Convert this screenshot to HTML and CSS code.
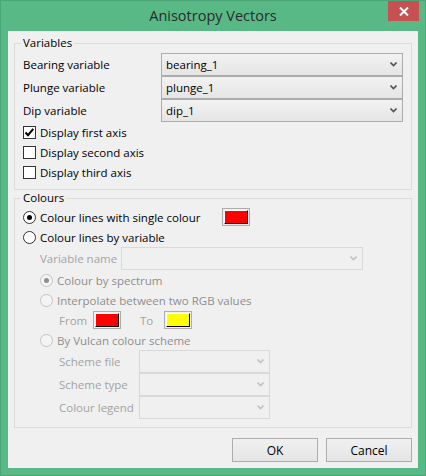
FILE: index.html
```html
<!DOCTYPE html>
<html lang="en">
<head>
  <meta charset="UTF-8">
  <meta name="viewport" content="width=device-width, initial-scale=1.0">
  <title>Anisotropy Vectors</title>
  <link rel="stylesheet" href="styles.css">
</head>
<body>

  <div class="window">
    <div class="titlebar">
      <span class="title">Anisotropy Vectors</span>
      <button class="close-button" aria-label="Close">
        <svg width="10" height="9" viewBox="0 0 10 9">
          <path d="M1 0.5 L9 8.5 M9 0.5 L1 8.5" stroke="#fff" stroke-width="2" fill="none"/>
        </svg>
      </button>
    </div>

    <div class="client">

      <div class="group group-variables">
        <div class="legend">Variables</div>

        <div class="field-row">
          <span class="field-label">Bearing variable</span>
          <div class="combo">
            <span>bearing_1</span>
            <svg class="arrow" width="7" height="5" viewBox="0 0 7 5"><path d="M0.5 0.5 L3.5 3.5 L6.5 0.5" stroke="#555" stroke-width="1.6" fill="none"/></svg>
          </div>
        </div>
        <div class="field-row">
          <span class="field-label">Plunge variable</span>
          <div class="combo">
            <span>plunge_1</span>
            <svg class="arrow" width="7" height="5" viewBox="0 0 7 5"><path d="M0.5 0.5 L3.5 3.5 L6.5 0.5" stroke="#555" stroke-width="1.6" fill="none"/></svg>
          </div>
        </div>
        <div class="field-row">
          <span class="field-label">Dip variable</span>
          <div class="combo">
            <span>dip_1</span>
            <svg class="arrow" width="7" height="5" viewBox="0 0 7 5"><path d="M0.5 0.5 L3.5 3.5 L6.5 0.5" stroke="#555" stroke-width="1.6" fill="none"/></svg>
          </div>
        </div>

        <div class="option-row">
          <span class="checkbox">
            <svg width="11" height="11" viewBox="0 0 11 11"><path d="M1.5 5.5 L4 8.2 L9.3 1.8" stroke="#000" stroke-width="2" fill="none"/></svg>
          </span>
          <span>Display first axis</span>
        </div>
        <div class="option-row">
          <span class="checkbox"></span>
          <span>Display second axis</span>
        </div>
        <div class="option-row">
          <span class="checkbox"></span>
          <span>Display third axis</span>
        </div>
      </div>

      <div class="group group-colours">
        <div class="legend">Colours</div>

        <div class="option-row">
          <span class="radio checked"></span>
          <span>Colour lines with single colour</span>
          <span class="swatch single"><span class="swatch-fill red"></span></span>
        </div>
        <div class="option-row">
          <span class="radio"></span>
          <span>Colour lines by variable</span>
        </div>

        <div class="field-row indent-1 disabled">
          <span class="field-label short">Variable name</span>
          <div class="combo">
            <span></span>
            <svg class="arrow" width="7" height="5" viewBox="0 0 7 5"><path d="M0.5 0.5 L3.5 3.5 L6.5 0.5" stroke="#c2c2c2" stroke-width="1.6" fill="none"/></svg>
          </div>
        </div>

        <div class="option-row indent-1 disabled">
          <span class="radio checked"></span>
          <span>Colour by spectrum</span>
        </div>
        <div class="option-row indent-1 disabled">
          <span class="radio"></span>
          <span>Interpolate between two RGB values</span>
        </div>
        <div class="option-row indent-2 disabled">
          <span class="pair-label">From</span>
          <span class="swatch"><span class="swatch-fill red"></span></span>
          <span class="pair-label to">To</span>
          <span class="swatch"><span class="swatch-fill yellow"></span></span>
        </div>
        <div class="option-row indent-1 disabled">
          <span class="radio"></span>
          <span>By Vulcan colour scheme</span>
        </div>

        <div class="field-row indent-2 disabled">
          <span class="field-label scheme">Scheme file</span>
          <div class="combo narrow">
            <span></span>
            <svg class="arrow" width="7" height="5" viewBox="0 0 7 5"><path d="M0.5 0.5 L3.5 3.5 L6.5 0.5" stroke="#c2c2c2" stroke-width="1.6" fill="none"/></svg>
          </div>
        </div>
        <div class="field-row indent-2 disabled">
          <span class="field-label scheme">Scheme type</span>
          <div class="combo narrow">
            <span></span>
            <svg class="arrow" width="7" height="5" viewBox="0 0 7 5"><path d="M0.5 0.5 L3.5 3.5 L6.5 0.5" stroke="#c2c2c2" stroke-width="1.6" fill="none"/></svg>
          </div>
        </div>
        <div class="field-row indent-2 disabled">
          <span class="field-label scheme">Colour legend</span>
          <div class="combo narrow">
            <span></span>
            <svg class="arrow" width="7" height="5" viewBox="0 0 7 5"><path d="M0.5 0.5 L3.5 3.5 L6.5 0.5" stroke="#c2c2c2" stroke-width="1.6" fill="none"/></svg>
          </div>
        </div>
      </div>

      <div class="button-bar">
        <button class="dialog-button">OK</button>
        <button class="dialog-button">Cancel</button>
      </div>

    </div>
  </div>

</body>
</html>
```

FILE: styles.css
```css
* {
  box-sizing: border-box;
}

body {
  margin: 0;
  font-family: 'Open Sans', 'Noto Sans', sans-serif;
  font-size: 11.5px;
  color: #000;
  background-color: #58b987;
}

.window {
  width: 426px;
  height: 476px;
  border: 1px solid #4aa676;
  background-color: #58b987;
  padding: 0 7px 7px 7px;
  position: relative;
}

/* title bar */
.titlebar {
  height: 30px;
  display: flex;
  align-items: center;
  justify-content: center;
}

.title {
  font-size: 14.5px;
  color: #2b2b2b;
  margin-top: -1px;
}

.close-button {
  position: absolute;
  top: 0;
  right: 6px;
  width: 31px;
  height: 20px;
  border: none;
  background-color: #c75050;
  display: flex;
  align-items: center;
  justify-content: center;
  padding: 0;
}

/* client area */
.client {
  height: 437px;
  background-color: #f0f0f0;
  padding: 12px 6px 0 6px;
  display: flex;
  flex-direction: column;
}

.group {
  border: 1px solid #dcdcdc;
  padding: 0 8px 0 8px;
  position: relative;
}

.group-variables {
  height: 147px;
  padding-top: 9px;
}

.group-colours {
  margin-top: 8px;
  height: 230px;
  padding-top: 8px;
}

.legend {
  position: absolute;
  top: -9px;
  left: 6px;
  padding: 0 2px;
  background-color: #f0f0f0;
  line-height: 16px;
}

/* label + combo rows */
.field-row {
  display: flex;
  align-items: center;
  height: 23px;
  white-space: nowrap;
}

.field-label {
  width: 138px;
  flex-shrink: 0;
}

.field-label.short {
  width: 81px;
}

.field-label.scheme {
  width: 80px;
}

.combo {
  width: 242px;
  height: 23px;
  flex-shrink: 0;
  border: 1px solid #acacac;
  background: linear-gradient(#f2f2f2, #e5e5e5);
  display: flex;
  align-items: center;
  justify-content: space-between;
  padding: 0 5px 0 4px;
}

.combo.narrow {
  width: 131px;
}

.disabled .combo {
  border-color: #d9d9d9;
  background: #f0f0f0;
}

/* checkbox and radio rows */
.option-row {
  display: flex;
  align-items: center;
  height: 20px;
  white-space: nowrap;
}

.checkbox {
  width: 13px;
  height: 13px;
  border: 1px solid #333;
  background-color: #fff;
  margin-right: 4px;
  display: flex;
  align-items: center;
  justify-content: center;
}

.radio {
  width: 13px;
  height: 13px;
  border: 1px solid #333;
  border-radius: 50%;
  background-color: #fff;
  margin-right: 4px;
  display: flex;
  align-items: center;
  justify-content: center;
}

.radio.checked::after {
  content: '';
  width: 5px;
  height: 5px;
  border-radius: 50%;
  background-color: #000;
}

.disabled {
  color: #8e8e8e;
}

.disabled .field-label,
.disabled .pair-label {
  color: #a3a3a3;
}

.disabled .radio {
  border-color: #c4c4c4;
  background-color: #f4f4f4;
}

.disabled .radio.checked::after {
  background-color: #8e8e8e;
}

.indent-1 {
  padding-left: 17px;
}

.indent-2 {
  padding-left: 36px;
}

.pair-label {
  width: 34px;
}

.pair-label.to {
  width: 24px;
  margin-left: 19px;
}

/* colour swatch buttons */
.swatch {
  width: 28px;
  height: 18px;
  border: 1px solid #adadad;
  background-color: #f0f0f0;
  padding: 1px;
}

.swatch.single {
  margin-left: 21px;
}

.swatch-fill {
  display: block;
  width: 100%;
  height: 100%;
  border-right: 1px solid #000;
  border-bottom: 1px solid #000;
  border-top: 1px solid #fff;
  border-left: 1px solid #fff;
}

.swatch-fill.red {
  background-color: #ff0000;
}

.swatch-fill.yellow {
  background-color: #ffff00;
}

/* OK / Cancel */
.button-bar {
  display: flex;
  justify-content: flex-end;
  gap: 8px;
  margin-top: 10px;
}

.dialog-button {
  width: 86px;
  height: 24px;
  border: 1px solid #acacac;
  background: linear-gradient(#f0f0f0, #e5e5e5);
  font-family: inherit;
  font-size: 12px;
  color: #000;
  padding: 0;
}
```
